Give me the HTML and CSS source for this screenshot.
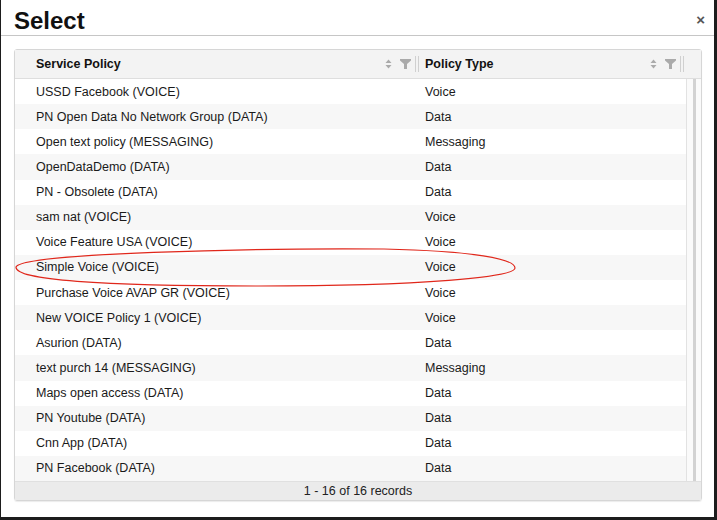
FILE: index.html
```html
<!DOCTYPE html>
<html>
<head>
<meta charset="utf-8">
<link rel="stylesheet" href="styles.css">
</head>
<body>
<div class="dialog">
  <div class="dlg-head">
    <h1 class="title">Select</h1>
    <span class="close">×</span>
  </div>
  <div class="grid">
    <div class="grid-head">
      <div class="hcell c1">
        <span class="htext">Service Policy</span>
        <span class="hicons">
          <svg class="sort" width="7" height="10" viewBox="0 0 7 10"><path d="M3.5 0.5 L6.5 4 L0.5 4 Z M3.5 9.5 L6.5 6 L0.5 6 Z" fill="#aaa"/></svg>
          <svg class="filter" width="11" height="10" viewBox="0 0 11 10"><path d="M0 0 H11 V1.5 L7 5 V10 L4 10 V5 L0 1.5 Z" fill="#aaa"/></svg>
          <span class="resizer"></span>
        </span>
      </div>
      <div class="hcell c2">
        <span class="htext">Policy Type</span>
        <span class="hicons">
          <svg class="sort" width="7" height="10" viewBox="0 0 7 10"><path d="M3.5 0.5 L6.5 4 L0.5 4 Z M3.5 9.5 L6.5 6 L0.5 6 Z" fill="#aaa"/></svg>
          <svg class="filter" width="11" height="10" viewBox="0 0 11 10"><path d="M0 0 H11 V1.5 L7 5 V10 L4 10 V5 L0 1.5 Z" fill="#aaa"/></svg>
          <span class="resizer"></span>
        </span>
      </div>
    </div>
    <div class="grid-body">
      <div class="rows">
        <div class="row"><span class="c1">USSD Facebook (VOICE)</span><span class="c2">Voice</span></div>
        <div class="row"><span class="c1">PN Open Data No Network Group (DATA)</span><span class="c2">Data</span></div>
        <div class="row"><span class="c1">Open text policy (MESSAGING)</span><span class="c2">Messaging</span></div>
        <div class="row"><span class="c1">OpenDataDemo (DATA)</span><span class="c2">Data</span></div>
        <div class="row"><span class="c1">PN - Obsolete (DATA)</span><span class="c2">Data</span></div>
        <div class="row"><span class="c1">sam nat (VOICE)</span><span class="c2">Voice</span></div>
        <div class="row"><span class="c1">Voice Feature USA (VOICE)</span><span class="c2">Voice</span></div>
        <div class="row"><span class="c1">Simple Voice (VOICE)</span><span class="c2">Voice</span></div>
        <div class="row"><span class="c1">Purchase Voice AVAP GR (VOICE)</span><span class="c2">Voice</span></div>
        <div class="row"><span class="c1">New VOICE Policy 1 (VOICE)</span><span class="c2">Voice</span></div>
        <div class="row"><span class="c1">Asurion (DATA)</span><span class="c2">Data</span></div>
        <div class="row"><span class="c1">text purch 14 (MESSAGING)</span><span class="c2">Messaging</span></div>
        <div class="row"><span class="c1">Maps open access (DATA)</span><span class="c2">Data</span></div>
        <div class="row"><span class="c1">PN Youtube (DATA)</span><span class="c2">Data</span></div>
        <div class="row"><span class="c1">Cnn App (DATA)</span><span class="c2">Data</span></div>
        <div class="row"><span class="c1">PN Facebook (DATA)</span><span class="c2">Data</span></div>
      </div>
      <div class="vscroll"><span class="track"></span></div>
    </div>
    <div class="grid-foot">1 - 16 of 16 records</div>
  </div>
  <svg class="annot" width="510" height="44" viewBox="0 0 510 44"><path d="M2 22 C 8 8, 240 3, 370 4 C 460 6, 501 14, 501 23 C 501 32, 410 41, 245 41 C 85 41, 1 35, 2 22 Z" fill="none" stroke="#e0271b" stroke-width="1.2"/></svg>
</div>
</body>
</html>
```
FILE: styles.css
```css
html, body {
  margin: 0;
  padding: 0;
}
body {
  background: #1d1d1d;
  width: 717px;
  height: 520px;
  overflow: hidden;
  font-family: "Liberation Sans", Arial, sans-serif;
  color: #222;
}
.dialog {
  position: relative;
  margin-left: 1px;
  width: 713px;
  height: 517px;
  background: #fff;
  display: flex;
  flex-direction: column;
}
.dlg-head {
  height: 35px;
  border-bottom: 1px solid #c6c6c6;
  display: flex;
  align-items: flex-start;
  justify-content: space-between;
  padding: 0 9px 0 13px;
}
.title {
  margin: 7px 0 0 0;
  font-size: 24px;
  font-weight: bold;
  line-height: 28px;
  color: #111;
}
.close {
  margin-top: 12px;
  font-size: 15px;
  font-weight: bold;
  color: #555;
  line-height: 16px;
}
.grid {
  margin: 13px 12px 0 13px;
  border: 1px solid #d6d6d6;
  border-radius: 3px;
  display: flex;
  flex-direction: column;
  box-shadow: 0 1px 1px rgba(0,0,0,0.08);
}
.grid-head {
  display: flex;
  height: 28px;
  background: #f3f3f3;
  border-bottom: 1px solid #dedede;
  font-size: 12.5px;
  font-weight: bold;
  color: #111;
}
.hcell {
  display: flex;
  align-items: center;
  justify-content: space-between;
}
.hcell.c1 {
  width: 404px;
  padding-left: 21px;
  box-sizing: border-box;
}
.hcell.c2 {
  width: 267px;
  padding-left: 6px;
  padding-right: 2px;
  box-sizing: border-box;
}
.hicons {
  display: flex;
  align-items: center;
}
.sort {
  margin-right: 8px;
}
.filter {
  margin-right: 4px;
}
.resizer {
  width: 4px;
  height: 16px;
  border-left: 1px solid #d0d0d0;
  border-right: 1px solid #d0d0d0;
  box-sizing: border-box;
}
.grid-body {
  display: flex;
  height: 402px;
}
.rows {
  width: 671px;
  border-right: 1px solid #e2e2e2;
}
.row {
  display: flex;
  height: 25.125px;
  align-items: center;
  font-size: 12.5px;
  color: #1a1a1a;
  background: #fff;
}
.row:nth-child(even) {
  background: #f7f7f7;
}
.row .c1 {
  width: 403px;
  padding-left: 21px;
  box-sizing: border-box;
}
.row .c2 {
  padding-left: 7px;
}
.vscroll {
  flex: 1;
  display: flex;
  padding-left: 6px;
  background: #fafafa;
}
.track {
  width: 3px;
  background: #d2d2d2;
  height: 100%;
}
.grid-foot {
  height: 18px;
  background: #ebebeb;
  border-top: 1px solid #e0e0e0;
  font-size: 12.5px;
  line-height: 18px;
  text-align: center;
  color: #222;
}
.annot {
  position: absolute;
  left: 13px;
  top: 245px;
}
```
